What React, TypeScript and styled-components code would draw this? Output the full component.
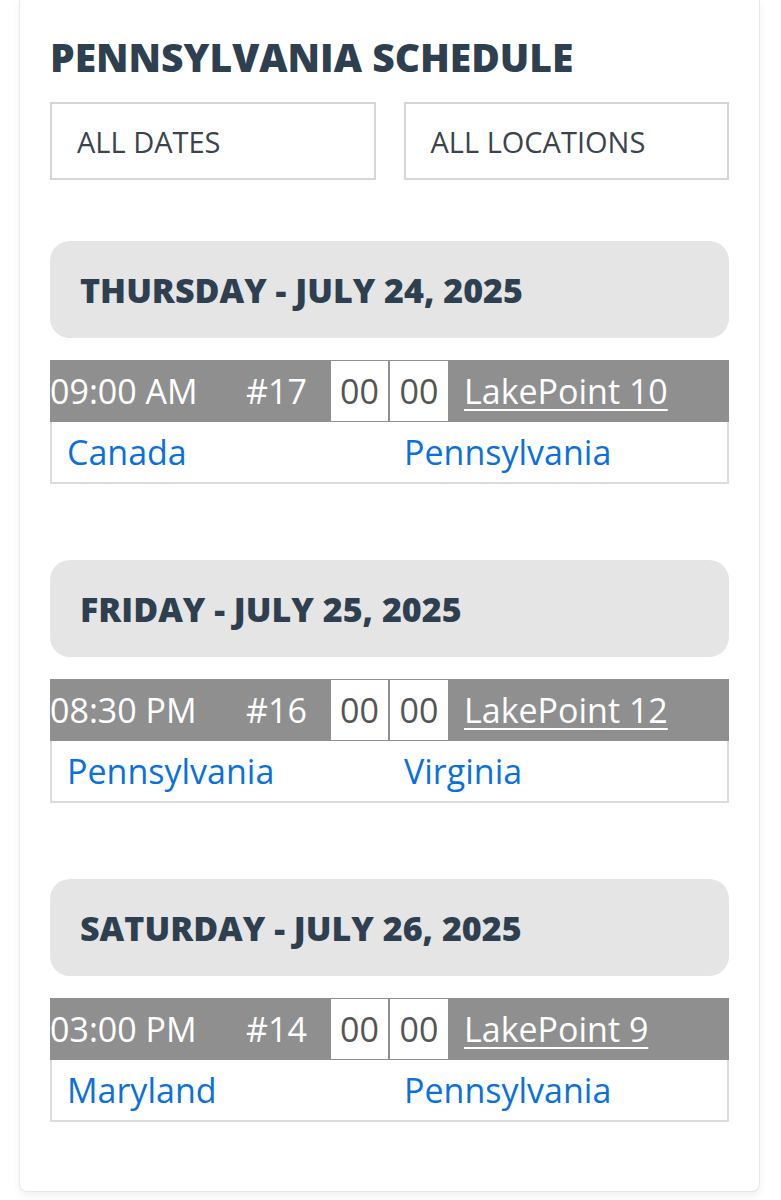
import React from "react";
import styled, { createGlobalStyle } from "styled-components";

const Global = createGlobalStyle`
  html, body { margin: 0; padding: 0; background: #fff; }
  body { font-family: "Open Sans", "Noto Sans", sans-serif; }
`;

const Page = styled.div`
  padding: 0 21px 10px 19px;
`;

const Card = styled.div`
  border: 1px solid #e8e8e8;
  border-top: none;
  border-radius: 0 0 8px 8px;
  box-shadow: 0 4px 8px rgba(0, 0, 0, 0.06);
  padding: 33px 30px 69px 30px;
  background: #fff;
`;

const Title = styled.h1`
  margin: 0;
  font-family: "Open Sans", sans-serif;
  font-weight: 800;
  font-size: 39px;
  line-height: 48px;
  color: #2e3f4f;
`;

const Filters = styled.div`
  display: grid;
  grid-template-columns: 1fr 1fr;
  gap: 28px;
  margin-top: 21px;
`;

const FilterBox = styled.div`
  height: 74px;
  border: 2px solid #d3d6da;
  display: flex;
  align-items: center;
  padding-left: 25px;
  font-size: 29px;
  font-weight: 500;
  color: #3b434b;
`;

const DaySection = styled.section`
  margin-top: 61px;
  & + & {
    margin-top: 76px;
  }
`;

const DayHeader = styled.div`
  height: 97px;
  border-radius: 20px;
  background: #e5e5e5;
  display: flex;
  align-items: center;
  padding-left: 30px;
  font-weight: 800;
  font-size: 34px;
  color: #2e3f4f;
`;

const Game = styled.div`
  margin-top: 22px;
`;

const InfoBar = styled.div`
  height: 62px;
  background: #8f8f8f;
  display: grid;
  grid-template-columns: 180px 101px 59px 60px 1fr;
  align-items: stretch;
  font-size: 34px;
  color: #fff;
`;

const Cell = styled.div<{ $pad?: number }>`
  display: flex;
  align-items: center;
  padding-left: ${(p) => p.$pad ?? 0}px;
  white-space: nowrap;
`;

const Score = styled.div`
  margin: 1px 2px 1px 0;
  background: #fff;
  color: #555;
  display: flex;
  align-items: center;
  justify-content: center;
`;

const Venue = styled.a`
  color: #fff;
  text-decoration: underline;
  text-decoration-thickness: 2px;
  text-underline-offset: 5px;
`;

const Teams = styled.div`
  height: 60px;
  border: 2px solid #dcdcdc;
  border-top: none;
  display: grid;
  grid-template-columns: 337px 1fr;
  align-items: center;
  font-size: 34px;
`;

const Team = styled.a<{ $pad: number }>`
  color: #0a70e0;
  text-decoration: none;
  padding-left: ${(p) => p.$pad}px;
`;

const days = [
  {
    label: "THURSDAY - JULY 24, 2025",
    time: "09:00 AM",
    num: "#17",
    venue: "LakePoint 10",
    home: "Canada",
    away: "Pennsylvania",
  },
  {
    label: "FRIDAY - JULY 25, 2025",
    time: "08:30 PM",
    num: "#16",
    venue: "LakePoint 12",
    home: "Pennsylvania",
    away: "Virginia",
  },
  {
    label: "SATURDAY - JULY 26, 2025",
    time: "03:00 PM",
    num: "#14",
    venue: "LakePoint 9",
    home: "Maryland",
    away: "Pennsylvania",
  },
];

export default function App() {
  return (
    <>
      <Global />
      <Page>
        <Card>
          <Title>PENNSYLVANIA SCHEDULE</Title>
          <Filters>
            <FilterBox>ALL DATES</FilterBox>
            <FilterBox>ALL LOCATIONS</FilterBox>
          </Filters>
          {days.map((d) => (
            <DaySection key={d.label}>
              <DayHeader>{d.label}</DayHeader>
              <Game>
                <InfoBar>
                  <Cell>{d.time}</Cell>
                  <Cell $pad={16}>{d.num}</Cell>
                  <Score>00</Score>
                  <Score>00</Score>
                  <Cell $pad={14}>
                    <Venue href="#">{d.venue}</Venue>
                  </Cell>
                </InfoBar>
                <Teams>
                  <Team $pad={15} href="#">{d.home}</Team>
                  <Team $pad={15} href="#">{d.away}</Team>
                </Teams>
              </Game>
            </DaySection>
          ))}
        </Card>
      </Page>
    </>
  );
}
